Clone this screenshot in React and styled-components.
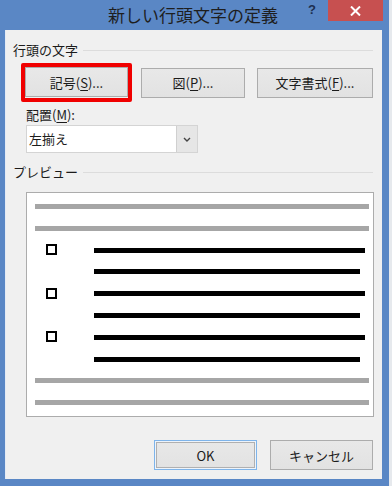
import styled, { createGlobalStyle } from 'styled-components';

const GlobalStyle = createGlobalStyle`
  html, body {
    margin: 0;
    padding: 0;
    background: #e6e9ed;
  }
  body {
    font-family: "Noto Sans CJK JP", "Noto Sans", sans-serif;
    color: #1b1b1b;
  }
`;

const Window = styled.div`
  width: 389px;
  height: 486px;
  background: #5a87c5;
  display: flex;
  flex-direction: column;
  box-sizing: border-box;
`;

const TitleBar = styled.div`
  height: 30px;
  display: grid;
  grid-template-columns: 1fr auto 1fr;
  align-items: start;
`;

const Title = styled.div`
  grid-column: 2;
  font-size: 17px;
  line-height: 30px;
  color: #1e1e1e;
  margin-right: 3px;
`;

const Controls = styled.div`
  grid-column: 3;
  justify-self: end;
  display: flex;
  align-items: flex-start;
  margin-right: 6px;
`;

const Help = styled.div`
  width: 20px;
  font-family: "Liberation Sans", sans-serif;
  font-weight: bold;
  font-size: 13px;
  line-height: 20px;
  color: #1d2f4f;
  text-align: center;
  margin-right: 6px;
`;

const Close = styled.div`
  width: 55px;
  height: 21px;
  background: #c75050;
  display: flex;
  align-items: center;
  justify-content: center;
`;

const Body = styled.div`
  flex: 1;
  margin: 0 0 7px 5px;
  width: 377px;
  background: #f0f0f0;
  border-left: 1px solid #e4ebf5;
  box-sizing: border-box;
  padding: 12px 9px 9px 7px;
  display: flex;
  flex-direction: column;
  font-size: 13px;
`;

const GroupHeader = styled.div`
  display: flex;
  align-items: center;
  height: 16px;
  line-height: 16px;
  margin-top: ${(p) => p.$top || 0}px;

  &::after {
    content: '';
    flex: 1;
    margin-left: 5px;
    border-top: 1px solid #dcdcdc;
  }
`;

const ButtonRow = styled.div`
  display: flex;
  align-items: center;
  margin-top: 5px;
  padding-left: 8px;
`;

const Highlight = styled.div`
  border: 4px solid #f00000;
  border-radius: 2px;
  display: flex;
  padding-bottom: 1px;
`;

const Button = styled.div`
  width: ${(p) => p.$w}px;
  height: 30px;
  box-sizing: border-box;
  margin-left: ${(p) => p.$ml || 0}px;
  background: linear-gradient(#e8e8e8, #e2e2e2);
  border: 1px solid #acacac;
  display: flex;
  align-items: center;
  justify-content: center;
  font-size: 13px;
  color: #1b1b1b;

  ${(p) =>
    p.$focus &&
    `
    border-color: #7eb4ea;
    box-shadow: inset 0 0 0 1px #eef4fb, inset 0 0 0 2px #b0b0b0;
  `}

  u {
    text-decoration-thickness: 1px;
    text-underline-offset: 2px;
  }
`;

const FieldLabel = styled.div`
  margin: 5px 0 0 13px;
  line-height: 16px;

  u {
    text-underline-offset: 2px;
  }
`;

const Select = styled.div`
  margin: 2px 0 0 13px;
  width: 172px;
  height: 28px;
  box-sizing: border-box;
  background: #fff;
  border: 1px solid #d4d4d4;
  display: flex;
`;

const SelectValue = styled.div`
  flex: 1;
  padding-left: 2px;
  line-height: 26px;
`;

const SelectArrow = styled.div`
  width: 20px;
  background: #e6e6e6;
  border-left: 1px solid #d0d0d0;
  display: flex;
  align-items: center;
  justify-content: center;
`;

const Preview = styled.div`
  margin: 12px 0 0 13px;
  width: 348px;
  height: 225px;
  box-sizing: border-box;
  background: #fff;
  border: 1px solid #acacac;
  padding: 11px 4px 0 8px;
  display: flex;
  flex-direction: column;
  gap: 16.8px;
`;

const Line = styled.div`
  height: 5px;
  background: ${(p) => (p.$gray ? '#a6a6a6' : '#000')};
  margin-left: ${(p) => p.$ml || 0}px;
  margin-right: ${(p) => p.$mr || 0}px;
  flex: ${(p) => (p.$grow ? 1 : 'none')};
`;

const BulletRow = styled.div`
  height: 5px;
  display: flex;
  align-items: center;
`;

const Bullet = styled.div`
  width: 11px;
  height: 11px;
  box-sizing: border-box;
  border: 2px solid #000;
  background: #fff;
  margin-left: 11px;
  margin-top: -1px;
`;

const Footer = styled.div`
  margin-top: auto;
  display: flex;
  justify-content: flex-end;
  gap: 13px;
`;

function BulletItem() {
  return (
    <>
      <BulletRow>
        <Bullet />
        <Line $grow $ml={37} $mr={4} />
      </BulletRow>
      <BulletRow>
        <Line $grow $ml={59} $mr={9} />
      </BulletRow>
    </>
  );
}

export default function App() {
  return (
    <>
      <GlobalStyle />
      <Window>
        <TitleBar>
          <Title>新しい行頭文字の定義</Title>
          <Controls>
            <Help>?</Help>
            <Close>
              <svg width="11" height="10" viewBox="0 0 11 10">
                <path d="M1 0.5 L10 9.5 M10 0.5 L1 9.5" stroke="#fff" strokeWidth="2" />
              </svg>
            </Close>
          </Controls>
        </TitleBar>
        <Body>
          <GroupHeader>行頭の文字</GroupHeader>
          <ButtonRow>
            <Highlight>
              <Button $w={103}>
                記号(<u>S</u>)...
              </Button>
            </Highlight>
            <Button $w={104} $ml={9}>
              図(<u>P</u>)...
            </Button>
            <Button $w={116} $ml={12}>
              文字書式(<u>F</u>)...
            </Button>
          </ButtonRow>
          <FieldLabel>
            配置(<u>M</u>):
          </FieldLabel>
          <Select>
            <SelectValue>左揃え</SelectValue>
            <SelectArrow>
              <svg width="8" height="5" viewBox="0 0 8 5">
                <path d="M1 1 L4 4 L7 1" fill="none" stroke="#444" strokeWidth="1.4" />
              </svg>
            </SelectArrow>
          </Select>
          <GroupHeader $top={11}>プレビュー</GroupHeader>
          <Preview>
            <Line $gray />
            <Line $gray />
            <BulletItem />
            <BulletItem />
            <BulletItem />
            <Line $gray />
            <Line $gray />
          </Preview>
          <Footer>
            <Button $w={103} $focus>
              OK
            </Button>
            <Button $w={103}>キャンセル</Button>
          </Footer>
        </Body>
      </Window>
    </>
  );
}
